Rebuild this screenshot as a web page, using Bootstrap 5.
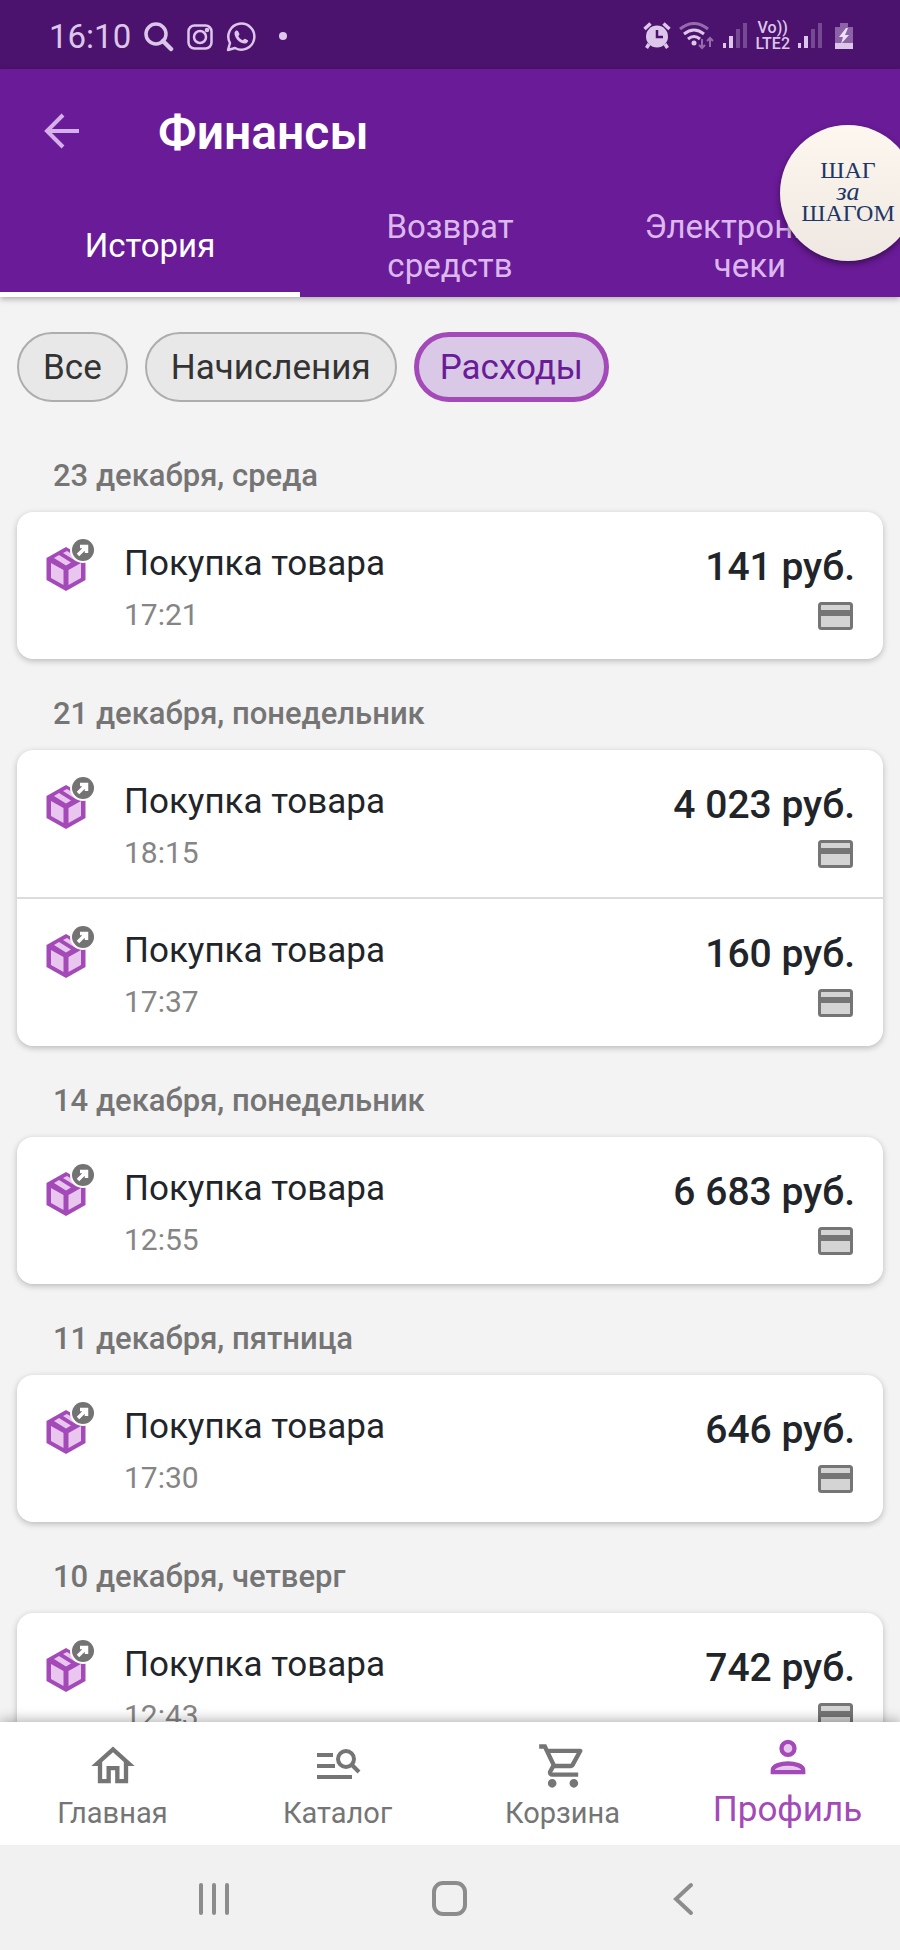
<!DOCTYPE html>
<html lang="ru">
<head>
<meta charset="utf-8">
<meta name="viewport" content="width=device-width, initial-scale=1">
<title>Финансы</title>
<link href="https://cdn.jsdelivr.net/npm/bootstrap@5.3.0/dist/css/bootstrap.min.css" rel="stylesheet">
<style>
  :root { --brand: #6a1b98; --brand-dark: #4b136d; --accent: #a349b8; --muted: #757575; --lilac: #dcb8ee; }
  body { font-family: Roboto, "Noto Sans", sans-serif; background: #f3f3f3; color: #212121; }
  svg { display: block; flex: none; }
  button { font-family: inherit; }

  .status-bar { background: var(--brand-dark); color: #dcc6ea; height: 69px; padding: 0 42px 0 49px; font-size: 33px; line-height: 40px; }
  .status-left { gap: 13px; padding-top: 4px; }
  .status-right { gap: 8px; padding-top: 3px; }
  .volte { font-size: 16px; line-height: 16px; font-weight: 500; }

  .app-header { background: var(--brand); z-index: 2; box-shadow: 0 2px 6px rgba(0,0,0,.3); }
  .toolbar { height: 125px; padding: 0 40px; gap: 75px; }
  .toolbar h1 { font-size: 48px; line-height: 56px; font-weight: 600; color: #fff; padding-top: 2px; }
  .icon-btn { background: none; border: 0; padding: 0; color: #d6b0ea; }
  .tab-link { height: 103px; padding: 5px 8px 0; font-size: 33px; line-height: 39px; color: var(--lilac); border-bottom: 5px solid transparent; text-decoration: none; }
  .tab-link.active { color: #fff; border-color: #fff; }

  .step-bubble { top: 125px; right: -16px; width: 136px; height: 136px; border: 0; padding: 0 0 2px; background: linear-gradient(#fdf7ef, #efe8e2); color: #1d3767; font-family: "Liberation Serif", serif; font-size: 24px; line-height: 21px; box-shadow: 0 3px 6px rgba(0,0,0,.45); z-index: 3; }
  .step-bubble i { font-size: 26px; }

  .feed { min-height: 0; padding: 35px 17px 0; }
  .chip-row { gap: 17px; margin-bottom: 47px; }
  .chip { height: 70px; border: 2px solid #adadad; background: #e8e8e8; color: #333; font-size: 35px; line-height: 40px; padding: 2px 24px 0; border-radius: 35px; }
  .chip.active { border: 5px solid var(--accent); background: #dac8e7; color: var(--brand); padding: 2px 21px 0; }

  .day-title { font-size: 31px; line-height: 40px; font-weight: 500; color: var(--muted); padding: 7px 36px 16px; margin: 0; }
  .day-card { border: 0; border-radius: 16px; box-shadow: 0 2px 6px rgba(0,0,0,.24); margin-bottom: 28px; overflow: hidden; }
  .op { border: 0; padding: 25px 28px 24px 29px; background: #fff; }
  .op + .op { border-top: 2px solid #dcdcdc; }
  .op-main { padding: 7px 0 0 28px; font-size: 35px; line-height: 40px; }
  .op-main time { font-size: 30px; line-height: 40px; color: #858585; margin-top: 11px; }
  .op-sum { padding-top: 7px; gap: 12px; font-size: 39px; line-height: 46px; font-weight: 500; }
  .op-sum svg { margin-right: 2px; }

  .bottom-nav { background: #fff; height: 123px; z-index: 2; box-shadow: 0 -2px 12px rgba(0,0,0,.3); }
  .bottom-nav a { padding-top: 18px; font-size: 29px; line-height: 43px; color: var(--muted); text-decoration: none; }
  .bottom-nav a.active { padding-top: 9px; font-size: 35px; line-height: 54px; color: var(--accent); }
  .system-nav { background: #f1f1f1; height: 105px; padding: 2px 97px 0; z-index: 2; }
  .system-nav button { color: #8c8c8c; }
</style>
</head>
<body>
<svg class="d-none" aria-hidden="true">
  <symbol id="parcel" viewBox="0 0 50 56">
    <path d="M20 10 39.500 21V43L20 54 .500 43V21Z" fill="#a349b8"/>
    <path d="M5 26 17.500 33V48L5 41ZM35 26 22.500 33V48L35 41Z" fill="#e8c6ee"/>
    <path d="M8 21 13 18 25 25.500 20 28.500ZM17 16 21 14 33 21.500 29 23.500Z" fill="#e8c6ee"/>
    <circle cx="37" cy="13" r="13" fill="#fff"/>
    <circle cx="37" cy="13" r="11" fill="#737373"/>
    <path d="M34 9.500h6.500V16M40 10 32 18" fill="none" stroke="#fff" stroke-width="3.500"/>
  </symbol>
  <symbol id="bankcard" viewBox="0 0 35 28">
    <rect x="1.500" y="1.500" width="32" height="25" rx="2" fill="#d4d4d4" stroke="#757575" stroke-width="3"/>
    <path d="M2 11H33" stroke="#757575" stroke-width="6"/>
  </symbol>
  <symbol id="signal" viewBox="0 0 24 26" fill="currentColor">
    <rect x="0" y="20" width="3" height="5"/><rect x="6" y="13" width="4" height="12"/>
    <rect x="13" y="6" width="4" height="19" opacity=".3"/><rect x="20" y="0" width="4" height="25" opacity=".3"/>
  </symbol>
</svg>

<div class="vh-100 d-flex flex-column overflow-hidden position-relative">
  <div class="status-bar flex-shrink-0 d-flex justify-content-between align-items-center">
    <div class="status-left d-flex align-items-center">
      <span>16:10</span>
      <svg width="30" height="30" viewBox="0 0 30 30" fill="none" stroke="currentColor"><circle cx="12" cy="12" r="10" stroke-width="3.500"/><path d="M19 19 27 27" stroke-width="4.500" stroke-linecap="round"/></svg>
      <svg width="26" height="26" viewBox="0 0 26 26" fill="none" stroke="currentColor" stroke-width="2.500"><rect x="1.500" y="1.500" width="23" height="23" rx="6"/><circle cx="13" cy="13" r="6"/><circle cx="20" cy="6" r="1"/></svg>
      <svg width="30" height="30" viewBox="0 0 30 30"><path d="M2 28 4 21A13 13 0 1 1 9 26Z" fill="none" stroke="currentColor" stroke-width="2.500" stroke-linejoin="round"/><path d="M8.500 10.500C9.500 8 11 8 12 9L13.500 12C13.500 13 12 14 12.500 14.500 13.500 16.500 15 17.500 16.500 18.200 17.500 18 18 16.500 19 16.700L22 18.200C22.500 19 21 21.500 19 21.500 13 21.500 8 15 8.500 10.500Z" fill="currentColor"/></svg>
      <svg width="38" height="30" viewBox="0 0 38 30"><circle cx="14" cy="14" r="4" fill="currentColor"/></svg>
    </div>
    <div class="status-right d-flex align-items-center">
      <svg width="28" height="28" viewBox="0 0 28 28"><path d="M1.500 7 7.500 1.500M26.500 7 20.500 1.500M6 22 3.500 26M22 22 24.500 26" stroke="currentColor" stroke-width="3.500"/><circle cx="14" cy="14.500" r="11" fill="currentColor"/><path d="M14 8V15H20" fill="none" stroke="#4b136d" stroke-width="2.500"/></svg>
      <svg width="36" height="28" viewBox="0 0 36 28" fill="none" stroke="currentColor" stroke-width="3"><path d="M1 7Q15-4 29 7" opacity=".5"/><path d="M5 12Q15 4 25 12M9 17Q15 12 21 17"/><circle cx="15" cy="21" r="2.500" fill="currentColor" stroke="none"/><path d="M23 17V26M20 23 23 26 26 23M31 25V16M28 19 31 16 34 19" stroke-width="2" opacity=".5"/></svg>
      <svg width="24" height="26"><use href="#signal"/></svg>
      <span class="volte text-center">Vo))<br>LTE2</span>
      <svg width="24" height="26"><use href="#signal"/></svg>
      <svg width="28" height="28" viewBox="0 0 28 28"><path d="M10 5V1H18V5H23V21H5V5Z" fill="currentColor" opacity=".45"/><rect x="5" y="21" width="18" height="6" fill="currentColor"/><path d="M16 6 9 15H13L11 22 19 13H15L18 6Z" fill="#eee0f6"/></svg>
    </div>
  </div>

  <header class="app-header flex-shrink-0">
    <div class="toolbar d-flex align-items-center">
      <button type="button" class="icon-btn" aria-label="Назад"><svg width="43" height="42" viewBox="0 0 43 42" fill="none" stroke="currentColor" stroke-width="4"><path d="M39 20H7M23 4 7 20 23 36"/></svg></button>
      <h1 class="mb-0">Финансы</h1>
    </div>
    <nav class="row g-0 text-center" aria-label="Разделы">
      <a href="#history" class="col-4 tab-link active d-flex align-items-center justify-content-center">История</a>
      <a href="#refund" class="col-4 tab-link d-flex align-items-center justify-content-center">Возврат<br>средств</a>
      <a href="#receipts" class="col-4 tab-link d-flex align-items-center justify-content-center">Электронные<br>чеки</a>
    </nav>
  </header>

  <button type="button" class="step-bubble position-absolute rounded-circle">ШАГ<br><i>за</i><br>ШАГОМ</button>

  <main class="feed flex-fill overflow-hidden">
    <div class="chip-row d-flex">
      <button type="button" class="chip">Все</button>
      <button type="button" class="chip">Начисления</button>
      <button type="button" class="chip active">Расходы</button>
    </div>

    <h2 class="day-title">23 декабря, среда</h2>
    <ul class="day-card list-group">
      <li class="op list-group-item d-flex align-items-start">
        <svg width="50" height="56"><use href="#parcel"/></svg>
        <div class="op-main flex-fill">Покупка товара<time class="d-block">17:21</time></div>
        <div class="op-sum d-flex flex-column align-items-end">141 руб.<svg width="35" height="28"><use href="#bankcard"/></svg></div>
      </li>
    </ul>

    <h2 class="day-title">21 декабря, понедельник</h2>
    <ul class="day-card list-group">
      <li class="op list-group-item d-flex align-items-start">
        <svg width="50" height="56"><use href="#parcel"/></svg>
        <div class="op-main flex-fill">Покупка товара<time class="d-block">18:15</time></div>
        <div class="op-sum d-flex flex-column align-items-end">4 023 руб.<svg width="35" height="28"><use href="#bankcard"/></svg></div>
      </li>
      <li class="op list-group-item d-flex align-items-start">
        <svg width="50" height="56"><use href="#parcel"/></svg>
        <div class="op-main flex-fill">Покупка товара<time class="d-block">17:37</time></div>
        <div class="op-sum d-flex flex-column align-items-end">160 руб.<svg width="35" height="28"><use href="#bankcard"/></svg></div>
      </li>
    </ul>

    <h2 class="day-title">14 декабря, понедельник</h2>
    <ul class="day-card list-group">
      <li class="op list-group-item d-flex align-items-start">
        <svg width="50" height="56"><use href="#parcel"/></svg>
        <div class="op-main flex-fill">Покупка товара<time class="d-block">12:55</time></div>
        <div class="op-sum d-flex flex-column align-items-end">6 683 руб.<svg width="35" height="28"><use href="#bankcard"/></svg></div>
      </li>
    </ul>

    <h2 class="day-title">11 декабря, пятница</h2>
    <ul class="day-card list-group">
      <li class="op list-group-item d-flex align-items-start">
        <svg width="50" height="56"><use href="#parcel"/></svg>
        <div class="op-main flex-fill">Покупка товара<time class="d-block">17:30</time></div>
        <div class="op-sum d-flex flex-column align-items-end">646 руб.<svg width="35" height="28"><use href="#bankcard"/></svg></div>
      </li>
    </ul>

    <h2 class="day-title">10 декабря, четверг</h2>
    <ul class="day-card list-group">
      <li class="op list-group-item d-flex align-items-start">
        <svg width="50" height="56"><use href="#parcel"/></svg>
        <div class="op-main flex-fill">Покупка товара<time class="d-block">12:43</time></div>
        <div class="op-sum d-flex flex-column align-items-end">742 руб.<svg width="35" height="28"><use href="#bankcard"/></svg></div>
      </li>
    </ul>
  </main>

  <nav class="bottom-nav flex-shrink-0 row g-0" aria-label="Основное меню">
    <a href="#home" class="col-3 d-flex flex-column align-items-center">
      <svg width="52" height="52" viewBox="0 0 24 24" fill="currentColor"><path d="M12 5.690l5 4.500V18h-2v-6H9v6H7v-7.810l5-4.500M12 3L2 12h3v8h6v-6h2v6h6v-8h3L12 3z"/></svg>Главная</a>
    <a href="#catalog" class="col-3 d-flex flex-column align-items-center">
      <svg width="52" height="52" viewBox="0 0 52 52" fill="none" stroke="currentColor" stroke-width="4"><path d="M5 15H21M5 26H23M5 37H40"/><circle cx="34" cy="19" r="8"/><path d="M39 24 47 32"/></svg>Каталог</a>
    <a href="#cart" class="col-3 d-flex flex-column align-items-center">
      <svg width="52" height="52" viewBox="0 0 24 24" fill="currentColor"><path d="M15.550 13c.75 0 1.410-.410 1.750-1.030l3.580-6.490C21.250 4.820 20.770 4 20.010 4H5.210l-.940-2H1v2h2l3.600 7.590-1.350 2.440C4.520 15.370 5.480 17 7 17h12v-2H7l1.100-2h7.450zM6.160 6h12.150l-2.760 5H8.530L6.160 6zM7 18c-1.100 0-1.990.9-1.990 2S5.900 22 7 22s2-.9 2-2-.9-2-2-2zm10 0c-1.100 0-1.990.9-1.990 2s.89 2 1.990 2 2-.9 2-2-.9-2-2-2z"/></svg>Корзина</a>
    <a href="#profile" class="col-3 d-flex flex-column align-items-center active" aria-current="page">
      <svg width="52" height="52" viewBox="0 0 24 24" fill="#e8c6ee" stroke="currentColor" stroke-width="2"><circle cx="12" cy="8" r="3"/><path d="M5 19V18C5 16 9 15 12 15S19 16 19 18V19Z"/></svg>Профиль</a>
  </nav>

  <div class="system-nav flex-shrink-0 row g-0 align-items-center">
    <div class="col-4 d-flex justify-content-center"><button type="button" class="icon-btn" aria-label="Недавние"><svg width="36" height="36" viewBox="0 0 36 36" stroke="currentColor" stroke-width="4" stroke-linecap="round"><path d="M4 4V32M17 4V32M30 4V32"/></svg></button></div>
    <div class="col-4 d-flex justify-content-center"><button type="button" class="icon-btn" aria-label="Домой"><svg width="36" height="36" viewBox="0 0 36 36" fill="none" stroke="currentColor" stroke-width="4"><rect x="2" y="2" width="31" height="31" rx="9"/></svg></button></div>
    <div class="col-4 d-flex justify-content-center"><button type="button" class="icon-btn" aria-label="Назад"><svg width="36" height="36" viewBox="0 0 36 36" fill="none" stroke="currentColor" stroke-width="4" stroke-linecap="round"><path d="M24 4 9 18 24 32"/></svg></button></div>
  </div>
</div>
<script src="https://cdn.jsdelivr.net/npm/bootstrap@5.3.0/dist/js/bootstrap.bundle.min.js"></script>
</body>
</html>
